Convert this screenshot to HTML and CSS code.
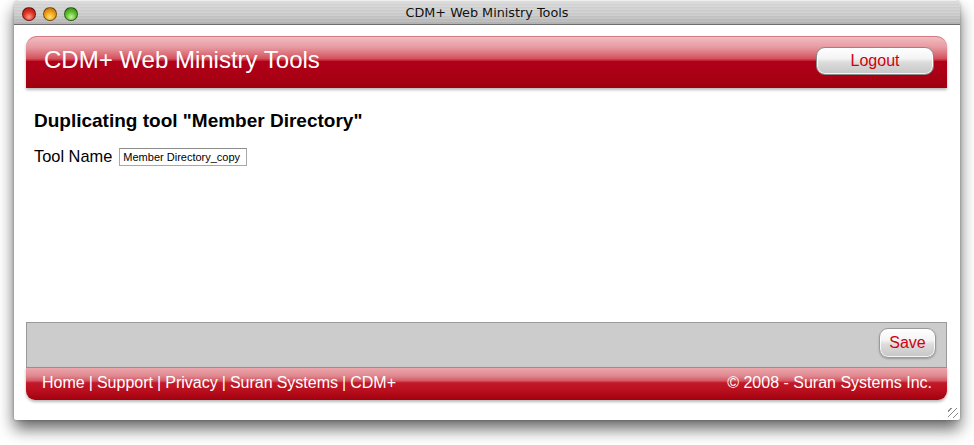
FILE: index.html
```html
<!DOCTYPE html>
<html>
<head>
	<meta charset="utf-8">
	<title>CDM+ Web Ministry Tools</title>
	<link rel="stylesheet" href="styles.css">
</head>
<body>
<div class="window">
	<div class="titlebar">
		<div class="lights">
			<span class="light red"></span>
			<span class="light amber"></span>
			<span class="light green"></span>
		</div>
		<div class="wintitle">CDM+ Web Ministry Tools</div>
	</div>
	<div class="content">
		<div class="header">
			<h1>CDM+ Web Ministry Tools</h1>
			<a class="btn logout">Logout</a>
		</div>
		<div class="main">
			<h2>Duplicating tool "Member Directory"</h2>
			<div class="field">
				<label>Tool Name</label>
				<input type="text" value="Member Directory_copy">
			</div>
		</div>
		<div class="actions">
			<a class="btn save">Save</a>
		</div>
		<div class="footer">
			<div class="links">Home | Support | Privacy | Suran Systems | CDM+</div>
			<div class="copy">&copy; 2008 - Suran Systems Inc.</div>
		</div>
		<div class="grip"></div>
	</div>
</div>
</body>
</html>
```

FILE: styles.css
```css
*{
	margin:0;
	padding:0;
	box-sizing:border-box;
}
body{
	background:#fff;
	font-family:"Liberation Sans", Arial, sans-serif;
	width:974px;
	height:445px;
	overflow:hidden;
}
.window{
	width:946px;
	margin-left:14px;
	border-radius:6px 6px 2px 2px;
	box-shadow:0 9px 16px rgba(0,0,0,0.6), 0 0 3px rgba(0,0,0,0.3);
	background:#fff;
}
.titlebar{
	height:25px;
	border-radius:6px 6px 0 0;
	border-bottom:1px solid #6e6e6e;
	background:
		repeating-linear-gradient(180deg, rgba(255,255,255,0.10) 0 1px, rgba(0,0,0,0.025) 1px 2px, rgba(255,255,255,0) 2px 3px),
		linear-gradient(180deg, #f2f2f2 0%, #d8d8d8 10%, #cccccc 60%, #b2b2b2 100%);
	display:flex;
	align-items:center;
	position:relative;
}
.lights{
	display:flex;
	gap:7px;
	margin-left:8px;
	margin-top:4px;
}
.light{
	width:14px;
	height:14px;
	border-radius:50%;
	border:1px solid rgba(0,0,0,0.45);
}
.light.red{
	background:radial-gradient(circle at 50% 75%, #ff9a8c 0%, #e0382a 45%, #a80c08 100%);
}
.light.amber{
	background:radial-gradient(circle at 50% 75%, #ffe27a 0%, #f0a418 45%, #b06204 100%);
}
.light.green{
	background:radial-gradient(circle at 50% 75%, #c8f59a 0%, #62c232 45%, #2c7a10 100%);
}
.wintitle{
	position:absolute;
	left:0;
	right:0;
	top:5px;
	text-align:center;
	font-family:"DejaVu Sans", sans-serif;
	font-size:12.8px;
	color:#111;
}
.content{
	height:395px;
	padding:11px 13px 20px 12px;
	display:flex;
	flex-direction:column;
	position:relative;
}
.header{
	height:52px;
	border-radius:11px 11px 0 0;
	border-top:1px solid #d27b84;
	background:linear-gradient(180deg, #f1bcc0 0%, #e79aa1 20%, #d45460 42%, #c52332 46%, #b2001a 48%, #a80013 80%, #9e000f 100%);
	box-shadow:0 2px 3px rgba(0,0,0,0.28);
	display:flex;
	align-items:center;
	justify-content:space-between;
	padding:0 13px 0 18px;
}
.header h1{
	font-weight:normal;
	font-size:24px;
	color:#fff;
	margin-top:-5px;
}
.btn{
	display:flex;
	align-items:center;
	justify-content:center;
	color:#d0000e;
	font-size:16px;
	border:1px solid #8a8a8a;
	border-radius:9px;
	background:linear-gradient(180deg, #ffffff 0%, #f4f4f4 40%, #dcdcdc 55%, #c6c6c6 100%);
	box-shadow:inset 0 0 0 1px rgba(255,255,255,0.8);
}
.logout{
	width:118px;
	height:28px;
	margin-top:-4px;
}
.main{
	flex:1;
	padding:21px 8px 0 8px;
}
.main h2{
	font-size:19px;
	line-height:23px;
	color:#000;
}
.field{
	display:flex;
	align-items:center;
	margin-top:15px;
	font-size:16.4px;
}
.field label{
	margin-right:7px;
}
.field input{
	width:128px;
	height:18px;
	border:1px solid #a8a8a8;
	border-top-color:#8c8c8c;
	font-family:"Liberation Sans", Arial, sans-serif;
	font-size:11px;
	padding:1px 3px 0 3px;
	color:#000;
}
.actions{
	height:45px;
	background:#cccccc;
	border:1px solid #999;
	border-bottom:none;
	display:flex;
	justify-content:flex-end;
	align-items:flex-start;
	padding:5px 10px 0 0;
}
.save{
	width:57px;
	height:30px;
	border-color:#9a9a9a;
	box-shadow:inset 0 0 0 1px rgba(255,255,255,0.8), 0 1px 2px rgba(0,0,0,0.25);
}
.footer{
	height:33px;
	border-radius:0 0 9px 9px;
	border-top:1px solid #d8717b;
	background:linear-gradient(180deg, #eba6ab 0%, #e0878f 25%, #d45863 40%, #c31a2a 46%, #b90f1f 70%, #a2000e 100%);
	box-shadow:0 2px 3px rgba(0,0,0,0.28);
	display:flex;
	justify-content:space-between;
	align-items:center;
	padding:0 15px 0 16px;
	color:#fff;
	font-size:16px;
}
.footer div{
	margin-top:-3px;
}
.links{
	word-spacing:-0.4px;
}
.grip{
	position:absolute;
	right:2px;
	bottom:2px;
	width:10px;
	height:10px;
	background:repeating-linear-gradient(135deg, transparent 0 2px, #8a8a8a 2px 3px, transparent 3px 4px);
}
```
